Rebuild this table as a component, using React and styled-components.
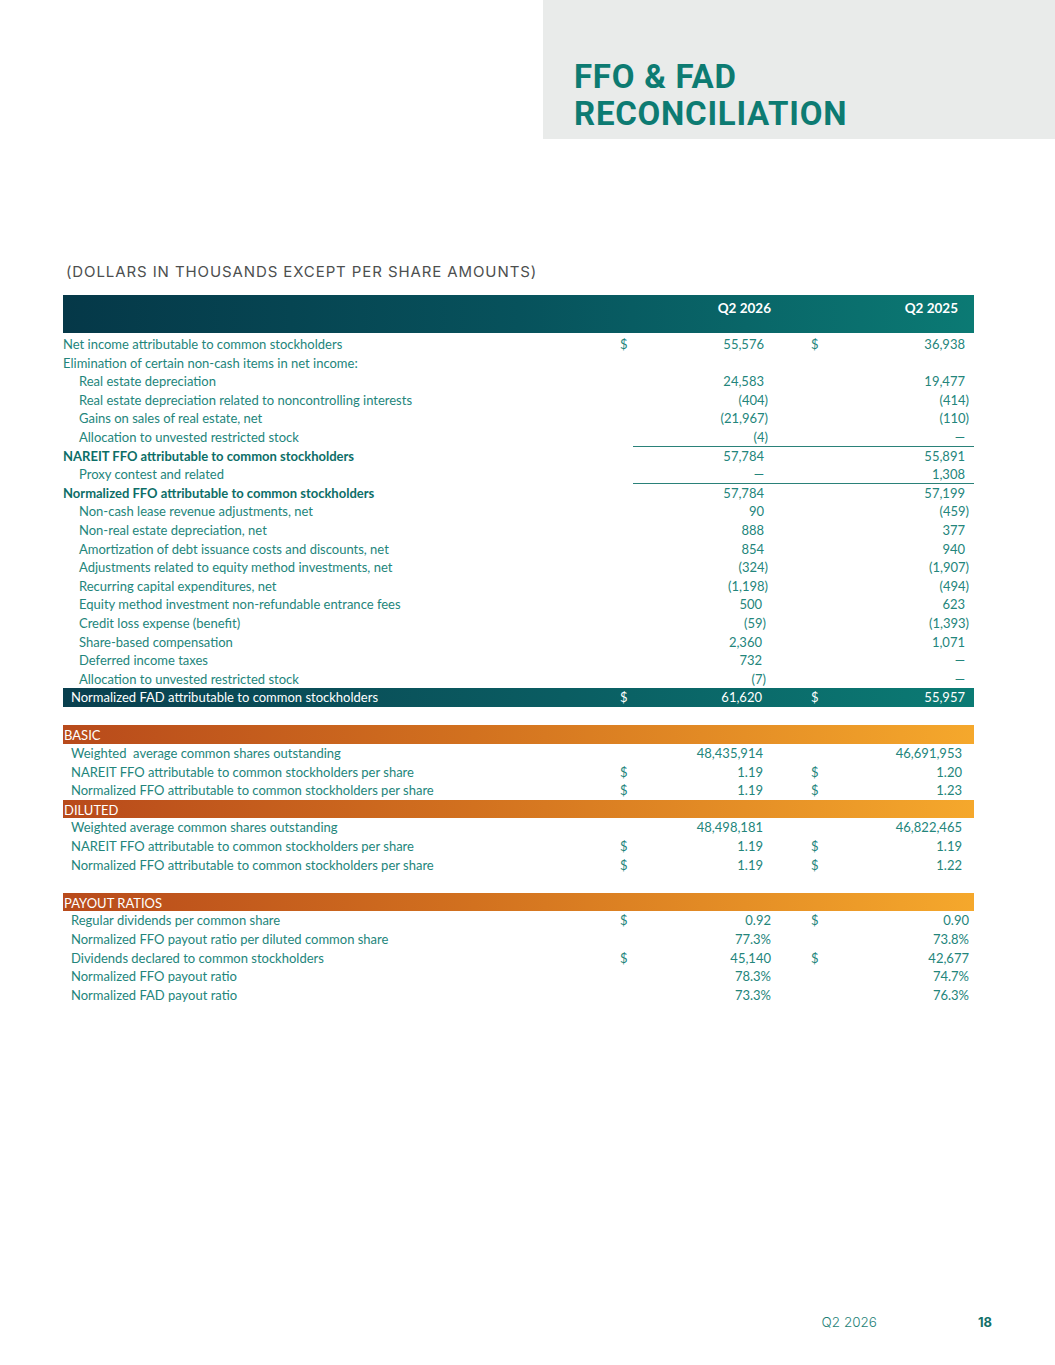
import React from 'react';
import styled, { createGlobalStyle } from 'styled-components';

const GlobalStyle = createGlobalStyle`
  body {
    margin: 0;
    background: #fff;
    font-family: Lato, "Liberation Sans", sans-serif;
  }
`;

const top = [
  { label: 'Net income attributable to common stockholders', d1: '$', v1: '55,576', d2: '$', v2: '36,938' },
  { label: 'Elimination of certain non-cash items in net income:' },
  { label: 'Real estate depreciation', indent: 16, v1: '24,583', v2: '19,477' },
  { label: 'Real estate depreciation related to noncontrolling interests', indent: 16, v1: '(404)', v2: '(414)' },
  { label: 'Gains on sales of real estate, net', indent: 16, v1: '(21,967)', v2: '(110)' },
  { label: 'Allocation to unvested restricted stock', indent: 16, v1: '(4)', v2: '—', rule: true },
  { label: 'NAREIT FFO attributable to common stockholders', bold: true, v1: '57,784', v2: '55,891' },
  { label: 'Proxy contest and related', indent: 16, v1: '—', v2: '1,308', rule: true },
  { label: 'Normalized FFO attributable to common stockholders', bold: true, v1: '57,784', v2: '57,199' },
  { label: 'Non-cash lease revenue adjustments, net', indent: 16, v1: '90', v2: '(459)' },
  { label: 'Non-real estate depreciation, net', indent: 16, v1: '888', v2: '377' },
  { label: 'Amortization of debt issuance costs and discounts, net', indent: 16, v1: '854', v2: '940' },
  { label: 'Adjustments related to equity method investments, net', indent: 16, v1: '(324)', v2: '(1,907)' },
  { label: 'Recurring capital expenditures, net', indent: 16, v1: '(1,198)', v2: '(494)' },
  { label: 'Equity method investment non-refundable entrance fees', indent: 16, v1: '500', v2: '623' },
  { label: 'Credit loss expense (benefit)', indent: 16, v1: '(59)', v2: '(1,393)' },
  { label: 'Share-based compensation', indent: 16, v1: '2,360', v2: '1,071' },
  { label: 'Deferred income taxes', indent: 16, v1: '732', v2: '—' },
  { label: 'Allocation to unvested restricted stock', indent: 16, v1: '(7)', v2: '—' },
  { label: 'Normalized FAD attributable to common stockholders', indent: 8, total: true, d1: '$', v1: '61,620', d2: '$', v2: '55,957' },
];

const perShare = [
  { section: 'BASIC' },
  { label: 'Weighted  average common shares outstanding', indent: 8, v1: '48,435,914', v2: '46,691,953' },
  { label: 'NAREIT FFO attributable to common stockholders per share', indent: 8, d1: '$', v1: '1.19', d2: '$', v2: '1.20' },
  { label: 'Normalized FFO attributable to common stockholders per share', indent: 8, d1: '$', v1: '1.19', d2: '$', v2: '1.23' },
  { section: 'DILUTED' },
  { label: 'Weighted average common shares outstanding', indent: 8, v1: '48,498,181', v2: '46,822,465' },
  { label: 'NAREIT FFO attributable to common stockholders per share', indent: 8, d1: '$', v1: '1.19', d2: '$', v2: '1.19' },
  { label: 'Normalized FFO attributable to common stockholders per share', indent: 8, d1: '$', v1: '1.19', d2: '$', v2: '1.22' },
];

const payout = [
  { section: 'PAYOUT RATIOS' },
  { label: 'Regular dividends per common share', indent: 8, d1: '$', v1: '0.92', d2: '$', v2: '0.90' },
  { label: 'Normalized FFO payout ratio per diluted common share', indent: 8, v1: '77.3%', v2: '73.8%' },
  { label: 'Dividends declared to common stockholders', indent: 8, d1: '$', v1: '45,140', d2: '$', v2: '42,677' },
  { label: 'Normalized FFO payout ratio', indent: 8, v1: '78.3%', v2: '74.7%' },
  { label: 'Normalized FAD payout ratio', indent: 8, v1: '73.3%', v2: '76.3%' },
];

// negative values in parentheses hang their closing paren past the column edge
function valuePad(v, base) {
  if (v && v.startsWith('(')) return base - 4;
  return base;
}

function DataRow({ row, pad1 = 8, pad2 = 5 }) {
  if (row.section) {
    return (
      <SectionBar>
        <SectionLabel>{row.section}</SectionLabel>
      </SectionBar>
    );
  }
  return (
    <Row $total={row.total}>
      <Label $indent={row.indent || 0} $bold={row.bold}>{row.label}</Label>
      <Dollar>{row.d1}</Dollar>
      <Value $pr={valuePad(row.v1, pad1)} $rule={row.rule}>{row.v1}</Value>
      <Gap $rule={row.rule} />
      <Dollar $rule={row.rule}>{row.d2}</Dollar>
      <Value $pr={valuePad(row.v2, pad2)} $rule={row.rule}>{row.v2}</Value>
      <Gap $rule={row.rule} />
    </Row>
  );
}

export default function App() {
  return (
    <>
      <GlobalStyle />
      <Page>
        <TitleBand>
          <TitlePanel>
            <Title>
              FFO &amp; FAD
              <br />
              RECONCILIATION
            </Title>
          </TitlePanel>
        </TitleBand>

        <Content>
          <Subtitle>(DOLLARS IN THOUSANDS EXCEPT PER SHARE AMOUNTS)</Subtitle>
          <Table>
            <HeadRow>
              <span />
              <span />
              <HeadCell $pr={1}>Q2 2026</HeadCell>
              <span />
              <span />
              <HeadCell $pr={12}>Q2 2025</HeadCell>
              <span />
            </HeadRow>
            {top.map((r, i) => (
              <DataRow key={'t' + i} row={r} pad1={i > 13 ? 10 : 8} />
            ))}
            <Blank />
            {perShare.map((r, i) => (
              <DataRow key={'p' + i} row={r} pad1={9} pad2={8} />
            ))}
            <Blank />
            {payout.map((r, i) => (
              <DataRow key={'r' + i} row={r} pad1={1} pad2={1} />
            ))}
          </Table>
        </Content>

        <Footer>
          <FooterPeriod>Q2 2026</FooterPeriod>
          <PageNumber>18</PageNumber>
        </Footer>
      </Page>
    </>
  );
}

const Page = styled.div`
  width: 1055px;
  min-height: 1365px;
  display: flex;
  flex-direction: column;
`;

const TitleBand = styled.div`
  display: flex;
  justify-content: flex-end;
`;

const TitlePanel = styled.div`
  width: 512px;
  height: 139px;
  background: #e9ebea;
  box-sizing: border-box;
  padding: 58px 0 0 31px;
`;

const Title = styled.h1`
  margin: 0;
  font-family: Roboto, "Liberation Sans", sans-serif;
  font-weight: 700;
  font-size: 33px;
  line-height: 37px;
  letter-spacing: 0.75px;
  color: #0d7b72;
`;

const Content = styled.div`
  padding: 124px 81px 0 63px;
`;

const Subtitle = styled.div`
  font-family: Inter, "Liberation Sans", sans-serif;
  font-size: 15px;
  line-height: 18px;
  letter-spacing: 0.9px;
  color: #4d4f4f;
  padding-left: 3px;
  margin-bottom: 14px;
`;

const Table = styled.div`
  width: 911px;
  display: flex;
  flex-direction: column;
`;

const cols = '554px 16px 139px 36px 16px 146px 4px';

const HeadRow = styled.div`
  display: grid;
  grid-template-columns: ${cols};
  height: 38px;
  margin-bottom: 2px;
  background: linear-gradient(90deg, #053848 0%, #07525c 50%, #0b7a74 100%);
`;

const HeadCell = styled.div`
  color: #fff;
  font-weight: 700;
  font-size: 13.5px;
  text-align: right;
  padding: 5px ${(p) => p.$pr}px 0 0;
  line-height: 17px;
`;

const Row = styled.div`
  display: grid;
  grid-template-columns: ${cols};
  height: 18.6px;
  line-height: 18.6px;
  font-size: 13px;
  color: ${(p) => (p.$total ? '#fff' : '#23857b')};
  background: ${(p) =>
    p.$total ? 'linear-gradient(90deg, #093f4e 0%, #0a5d62 55%, #0b7b74 100%)' : 'transparent'};
`;

const Label = styled.div`
  padding-left: ${(p) => p.$indent}px;
  font-weight: ${(p) => (p.$bold ? 700 : 400)};
  color: ${(p) => (p.$bold ? '#0d6e67' : 'inherit')};
  white-space: pre;
`;

const Dollar = styled.div`
  padding-left: 3px;
  box-shadow: ${(p) => (p.$rule ? 'inset 0 -1px 0 #2a8179' : 'none')};
`;

const Value = styled.div`
  text-align: right;
  padding-right: ${(p) => p.$pr}px;
  box-shadow: ${(p) => (p.$rule ? 'inset 0 -1px 0 #2a8179' : 'none')};
`;

const Gap = styled.div`
  box-shadow: ${(p) => (p.$rule ? 'inset 0 -1px 0 #2a8179' : 'none')};
`;

const Blank = styled.div`
  height: 18.6px;
`;

const SectionBar = styled.div`
  height: 18.6px;
  line-height: 18.6px;
  background: linear-gradient(90deg, #b84a1b 0%, #d2711f 45%, #f5a82c 100%);
`;

const SectionLabel = styled.span`
  color: #fff;
  font-size: 13px;
  padding-left: 1px;
`;

const Footer = styled.div`
  margin-top: auto;
  display: flex;
  justify-content: flex-end;
  align-items: baseline;
  gap: 101px;
  padding: 0 63px 35px 0;
`;

const FooterPeriod = styled.span`
  font-family: Inter, "Liberation Sans", sans-serif;
  font-size: 13.5px;
  font-weight: 300;
  color: #1d7f77;
`;

const PageNumber = styled.span`
  font-family: Inter, "Liberation Sans", sans-serif;
  font-size: 13px;
  font-weight: 700;
  color: #147069;
`;
